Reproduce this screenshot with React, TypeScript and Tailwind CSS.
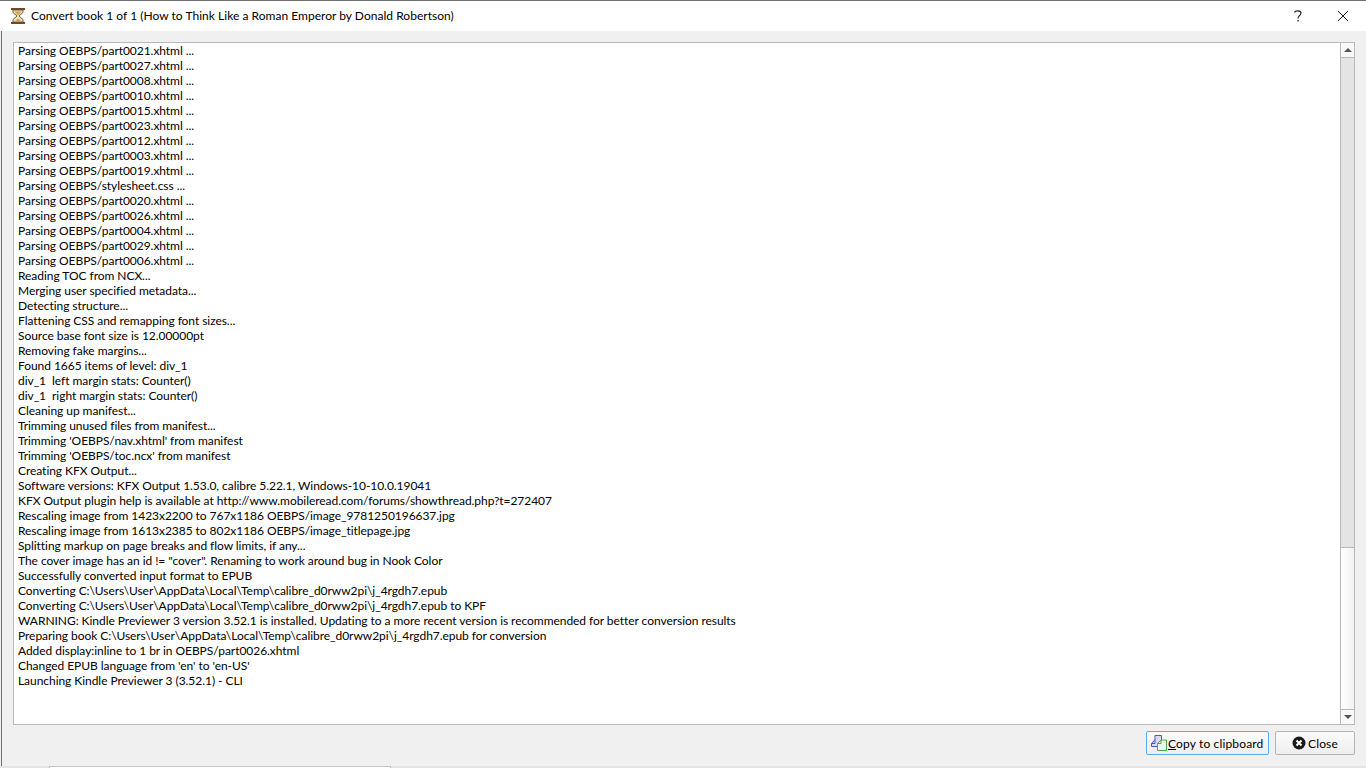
const logLines = [
  'Parsing OEBPS/part0021.xhtml ...',
  'Parsing OEBPS/part0027.xhtml ...',
  'Parsing OEBPS/part0008.xhtml ...',
  'Parsing OEBPS/part0010.xhtml ...',
  'Parsing OEBPS/part0015.xhtml ...',
  'Parsing OEBPS/part0023.xhtml ...',
  'Parsing OEBPS/part0012.xhtml ...',
  'Parsing OEBPS/part0003.xhtml ...',
  'Parsing OEBPS/part0019.xhtml ...',
  'Parsing OEBPS/stylesheet.css ...',
  'Parsing OEBPS/part0020.xhtml ...',
  'Parsing OEBPS/part0026.xhtml ...',
  'Parsing OEBPS/part0004.xhtml ...',
  'Parsing OEBPS/part0029.xhtml ...',
  'Parsing OEBPS/part0006.xhtml ...',
  'Reading TOC from NCX...',
  'Merging user specified metadata...',
  'Detecting structure...',
  'Flattening CSS and remapping font sizes...',
  'Source base font size is 12.00000pt',
  'Removing fake margins...',
  'Found 1665 items of level: div_1',
  'div_1  left margin stats: Counter()',
  'div_1  right margin stats: Counter()',
  'Cleaning up manifest...',
  'Trimming unused files from manifest...',
  "Trimming 'OEBPS/nav.xhtml' from manifest",
  "Trimming 'OEBPS/toc.ncx' from manifest",
  'Creating KFX Output...',
  'Software versions: KFX Output 1.53.0, calibre 5.22.1, Windows-10-10.0.19041',
  'KFX Output plugin help is available at http://www.mobileread.com/forums/showthread.php?t=272407',
  'Rescaling image from 1423x2200 to 767x1186 OEBPS/image_9781250196637.jpg',
  'Rescaling image from 1613x2385 to 802x1186 OEBPS/image_titlepage.jpg',
  'Splitting markup on page breaks and flow limits, if any...',
  'The cover image has an id != "cover". Renaming to work around bug in Nook Color',
  'Successfully converted input format to EPUB',
  'Converting C:\\Users\\User\\AppData\\Local\\Temp\\calibre_d0rww2pi\\j_4rgdh7.epub',
  'Converting C:\\Users\\User\\AppData\\Local\\Temp\\calibre_d0rww2pi\\j_4rgdh7.epub to KPF',
  'WARNING: Kindle Previewer 3 version 3.52.1 is installed. Updating to a more recent version is recommended for better conversion results',
  'Preparing book C:\\Users\\User\\AppData\\Local\\Temp\\calibre_d0rww2pi\\j_4rgdh7.epub for conversion',
  'Added display:inline to 1 br in OEBPS/part0026.xhtml',
  "Changed EPUB language from 'en' to 'en-US'",
  'Launching Kindle Previewer 3 (3.52.1) - CLI',
];

function Hourglass() {
  return (
    <svg width="16" height="18" viewBox="0 0 16 18">
      <path d="M3 3h10v2.5L9 9l4 3.5V15H3v-2.5L7 9 3 5.5z" fill="#eadfc0" stroke="#7a5a36" />
      <path d="M4.5 4.5h7L8 8.5z" fill="#c9a94e" />
      <path d="M4.5 14.5L8 11.5l3.5 3z" fill="#c9a94e" />
      <rect x="1" y="1" width="14" height="2" fill="#6b4a2a" />
      <rect x="1" y="15" width="14" height="2" fill="#6b4a2a" />
    </svg>
  );
}

function CopyIcon() {
  return (
    <svg width="18" height="18" viewBox="0 0 18 18" className="shrink-0">
      <path d="M1.5 9.5L5 5.5V1.5h6.5v11h-10z" fill="#d8dcf5" stroke="#4a55c8" />
      <path d="M5 5.5v4H1.5" fill="none" stroke="#4a55c8" />
      <path d="M7.5 9.5L11 6h5.5v10.5h-9z" fill="#eef6ea" stroke="#4aa84a" />
      <path d="M11 6v3.5H7.5" fill="none" stroke="#4aa84a" />
    </svg>
  );
}

function CloseIcon() {
  return (
    <svg width="14" height="14" viewBox="0 0 14 14" className="shrink-0">
      <circle cx="7" cy="7" r="6.5" fill="#1a1a1a" />
      <path d="M4.5 4.5l5 5M9.5 4.5l-5 5" stroke="#fff" strokeWidth="2" />
    </svg>
  );
}

export default function App() {
  return (
    <div className="h-screen flex flex-col bg-[#f0f0f0] overflow-hidden text-[12px] leading-[15px] text-black font-['Lato','Roboto',sans-serif]">
      <div className="h-[31px] shrink-0 bg-white border-t border-[#6f6f6f] flex items-center pl-[10px]">
        <Hourglass />
        <span className="ml-[5px] mb-[2px] tracking-[0.03px]">Convert book 1 of 1 (How to Think Like a Roman Emperor by Donald Robertson)</span>
        <div className="ml-auto flex items-center">
          <svg width="10" height="14" viewBox="0 0 10 14" className="mr-[34px]">
            <path d="M1.5 3.5C2 1.5 8 1 8 4c0 2.5-3 2.5-3 5.5" fill="none" stroke="#222" strokeWidth="1.1" />
            <rect x="4.4" y="11" width="1.3" height="1.5" fill="#222" />
          </svg>
          <svg width="12" height="12" viewBox="0 0 12 12" className="mr-[17px]">
            <path d="M1 1l10 10M11 1L1 11" stroke="#222" strokeWidth="1" />
          </svg>
        </div>
      </div>

      <div className="flex-1 flex flex-col border-l-2 border-[#f0f0f0] relative">
        <div className="absolute left-[-1px] top-0 bottom-0 w-px bg-[#6f6f6f]" />
        <div className="h-[683px] mt-[11px] ml-[11px] w-[1342px] flex border border-[#b9b9b9] bg-white">
          <div className="flex-1 pl-[4px] tracking-[-0.05px]">
            {logLines.map((line, i) => (
              <div key={i} className="h-[15px] whitespace-pre">{line}</div>
            ))}
          </div>
          <div className="w-[14px] flex flex-col border-l border-[#b9b9b9] bg-[#e4e4e4]">
            <div className="h-[15px] border-b border-[#b9b9b9] bg-[#f8f8f8] flex items-center justify-center">
              <div className="w-0 h-0 border-x-[4px] border-x-transparent border-b-[4px] border-b-[#555555]" />
            </div>
            <div className="flex-1" />
            <div className="h-[162px] border-t border-[#b9b9b9] bg-gradient-to-r from-white to-[#f2f2f2]" />
            <div className="h-[15px] border-t border-[#b9b9b9] bg-[#f8f8f8] flex items-center justify-center">
              <div className="w-0 h-0 border-x-[4px] border-x-transparent border-t-[4px] border-t-[#555555]" />
            </div>
          </div>
        </div>

        <div className="flex justify-end gap-[6px] mt-[6px] w-[1353px]">
          <button className="w-[123px] h-[24px] flex items-center pl-[3px] rounded-[2px] border border-[#56aef0] bg-gradient-to-b from-[#fbfbfb] to-[#eeeeee] tracking-[0.15px]">
            <CopyIcon />
            <span><span className="underline">C</span>opy to clipboard</span>
          </button>
          <button className="w-[80px] h-[24px] flex items-center pl-[16px] gap-[2px] rounded-[2px] border border-[#b4b4b4] bg-gradient-to-b from-[#fbfbfb] to-[#eeeeee] tracking-[0.15px]">
            <CloseIcon />
            <span>Close</span>
          </button>
        </div>
      </div>

      <div className="h-[2px] shrink-0 flex">
        <div className="w-[49px] bg-[#e4e4e4]" />
        <div className="w-[342px] bg-white border-t border-x border-[#c4c4c4]" />
        <div className="flex-1 bg-[#e4e4e4]" />
      </div>
    </div>
  );
}
